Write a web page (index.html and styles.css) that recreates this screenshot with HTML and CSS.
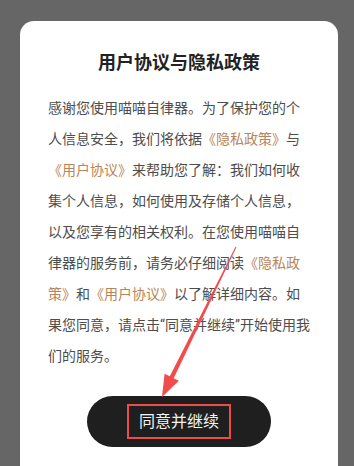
FILE: index.html
```html
<!DOCTYPE html>
<html lang="zh-CN">
<head>
<meta charset="utf-8">
<title>用户协议与隐私政策</title>
<link rel="stylesheet" href="styles.css">
</head>
<body>
<div class="card">
  <h1 class="title">用户协议与隐私政策</h1>
  <p class="body">感谢您使用喵喵自律器。为了保护您的个人信息安全，我们将依据<span class="link">《隐私政策》</span>与<span class="link">《用户协议》</span>来帮助您了解：我们如何收集个人信息，如何使用及存储个人信息，以及您享有的相关权利。在您使用喵喵自律器的服务前，请务必仔细阅读<span class="link">《隐私政策》</span>和<span class="link">《用户协议》</span>以了解详细内容。如果您同意，请点击“同意并继续”开始使用我们的服务。</p>
  <div class="actions">
    <button class="btn"><span class="btn-label">同意并继续</span></button>
  </div>
</div>
<svg class="arrow" width="354" height="466" viewBox="0 0 354 466">
  <polygon fill="#f24b4b" points="162,397 178.9,380.8 173.7,378.2 236.45,247.2 235.55,246.8 169.8,376.3 164.6,373.7"/>
</svg>
</body>
</html>
```
FILE: styles.css
```css
html, body {
  margin: 0;
  padding: 0;
}
body {
  width: 354px;
  height: 466px;
  overflow: hidden;
  background: #666666;
  font-family: Roboto, "Noto Sans CJK SC", sans-serif;
  position: relative;
}
.card {
  margin: 21px 16px 0 20px;
  height: 445px;
  box-sizing: border-box;
  background: #ffffff;
  border-radius: 14px 14px 0 0;
  padding: 30px 28px 0 28px;
}
.title {
  margin: 0;
  font-size: 18px;
  line-height: 24px;
  font-weight: 700;
  color: #222222;
  text-align: center;
}
.body {
  margin: 18px 0 0 0;
  font-size: 14px;
  line-height: 31px;
  color: #4d4d4d;
}
.link {
  color: #b98458;
}
.actions {
  display: flex;
  justify-content: center;
  margin-top: 24px;
}
.btn {
  width: 184px;
  height: 51px;
  border: none;
  border-radius: 26px;
  background: #1f1f1f;
  display: flex;
  align-items: center;
  justify-content: center;
  padding: 0;
  font-family: inherit;
}
.btn-label {
  display: inline-block;
  box-sizing: border-box;
  height: 35px;
  line-height: 31px;
  padding: 0 10px;
  border: 2px solid #ee4b4b;
  color: #f2f2f2;
  font-size: 16px;
}
.arrow {
  position: absolute;
  left: 0;
  top: 0;
  pointer-events: none;
}
```
